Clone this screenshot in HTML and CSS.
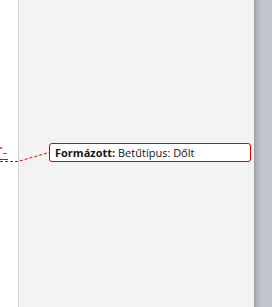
FILE: index.html
```html
<!DOCTYPE html>
<html lang="en">
<head>
    <meta charset="UTF-8">
    <title>Markup area</title>
    <link rel="stylesheet" href="styles.css">
</head>
<body>
    <div class="page">
        <div class="doc">
            <svg class="marks" width="18" height="307">
                <rect x="0" y="147" width="2" height="2" fill="#ff3fa0"/>
                <rect x="3" y="153" width="4" height="1" fill="#e04020"/>
                <rect x="0" y="159" width="8" height="1" fill="#e00000"/>
            </svg>
        </div>
        <div class="markup">
            <div class="balloon">
                <b>Formázott:</b> Betűtípus: Dőlt
            </div>
        </div>
        <div class="edge"></div>
    </div>
    <svg class="connector" width="60" height="307">
        <polyline points="0,161.5 18,161.5 49,152.5" fill="none" stroke="#e00000" stroke-width="1" stroke-dasharray="3 2"/>
    </svg>
</body>
</html>
```

FILE: styles.css
```css
html {
    overflow: hidden;
    background: #c1c5cb;
}

body {
    margin: 0;
    font-family: "Open Sans", "Noto Sans", sans-serif;
}

.page {
    display: flex;
    height: 100vh;
}

.doc {
    width: 18px;
    flex-shrink: 0;
    background: #fff;
    border-right: 1px solid #d4d4d6;
}

.marks {
    display: block;
}

.markup {
    width: 235px;
    flex-shrink: 0;
    background: #f3f3f3;
    padding-top: 143px;
}

.balloon {
    margin-left: 30px;
    width: 195px;
    height: 17px;
    background: #fff;
    border: 1px solid #e00000;
    border-radius: 3px;
    font-size: 11px;
    line-height: 17px;
    padding-left: 5px;
    color: #141414;
    white-space: nowrap;
}

.edge {
    flex: 1;
    background: linear-gradient(90deg, #9ca0a6 0, #b0b4ba 3px, #bdc1c7 6px, #c1c5cb 9px);
}

.connector {
    position: absolute;
    left: 0;
    top: 0;
}
```
